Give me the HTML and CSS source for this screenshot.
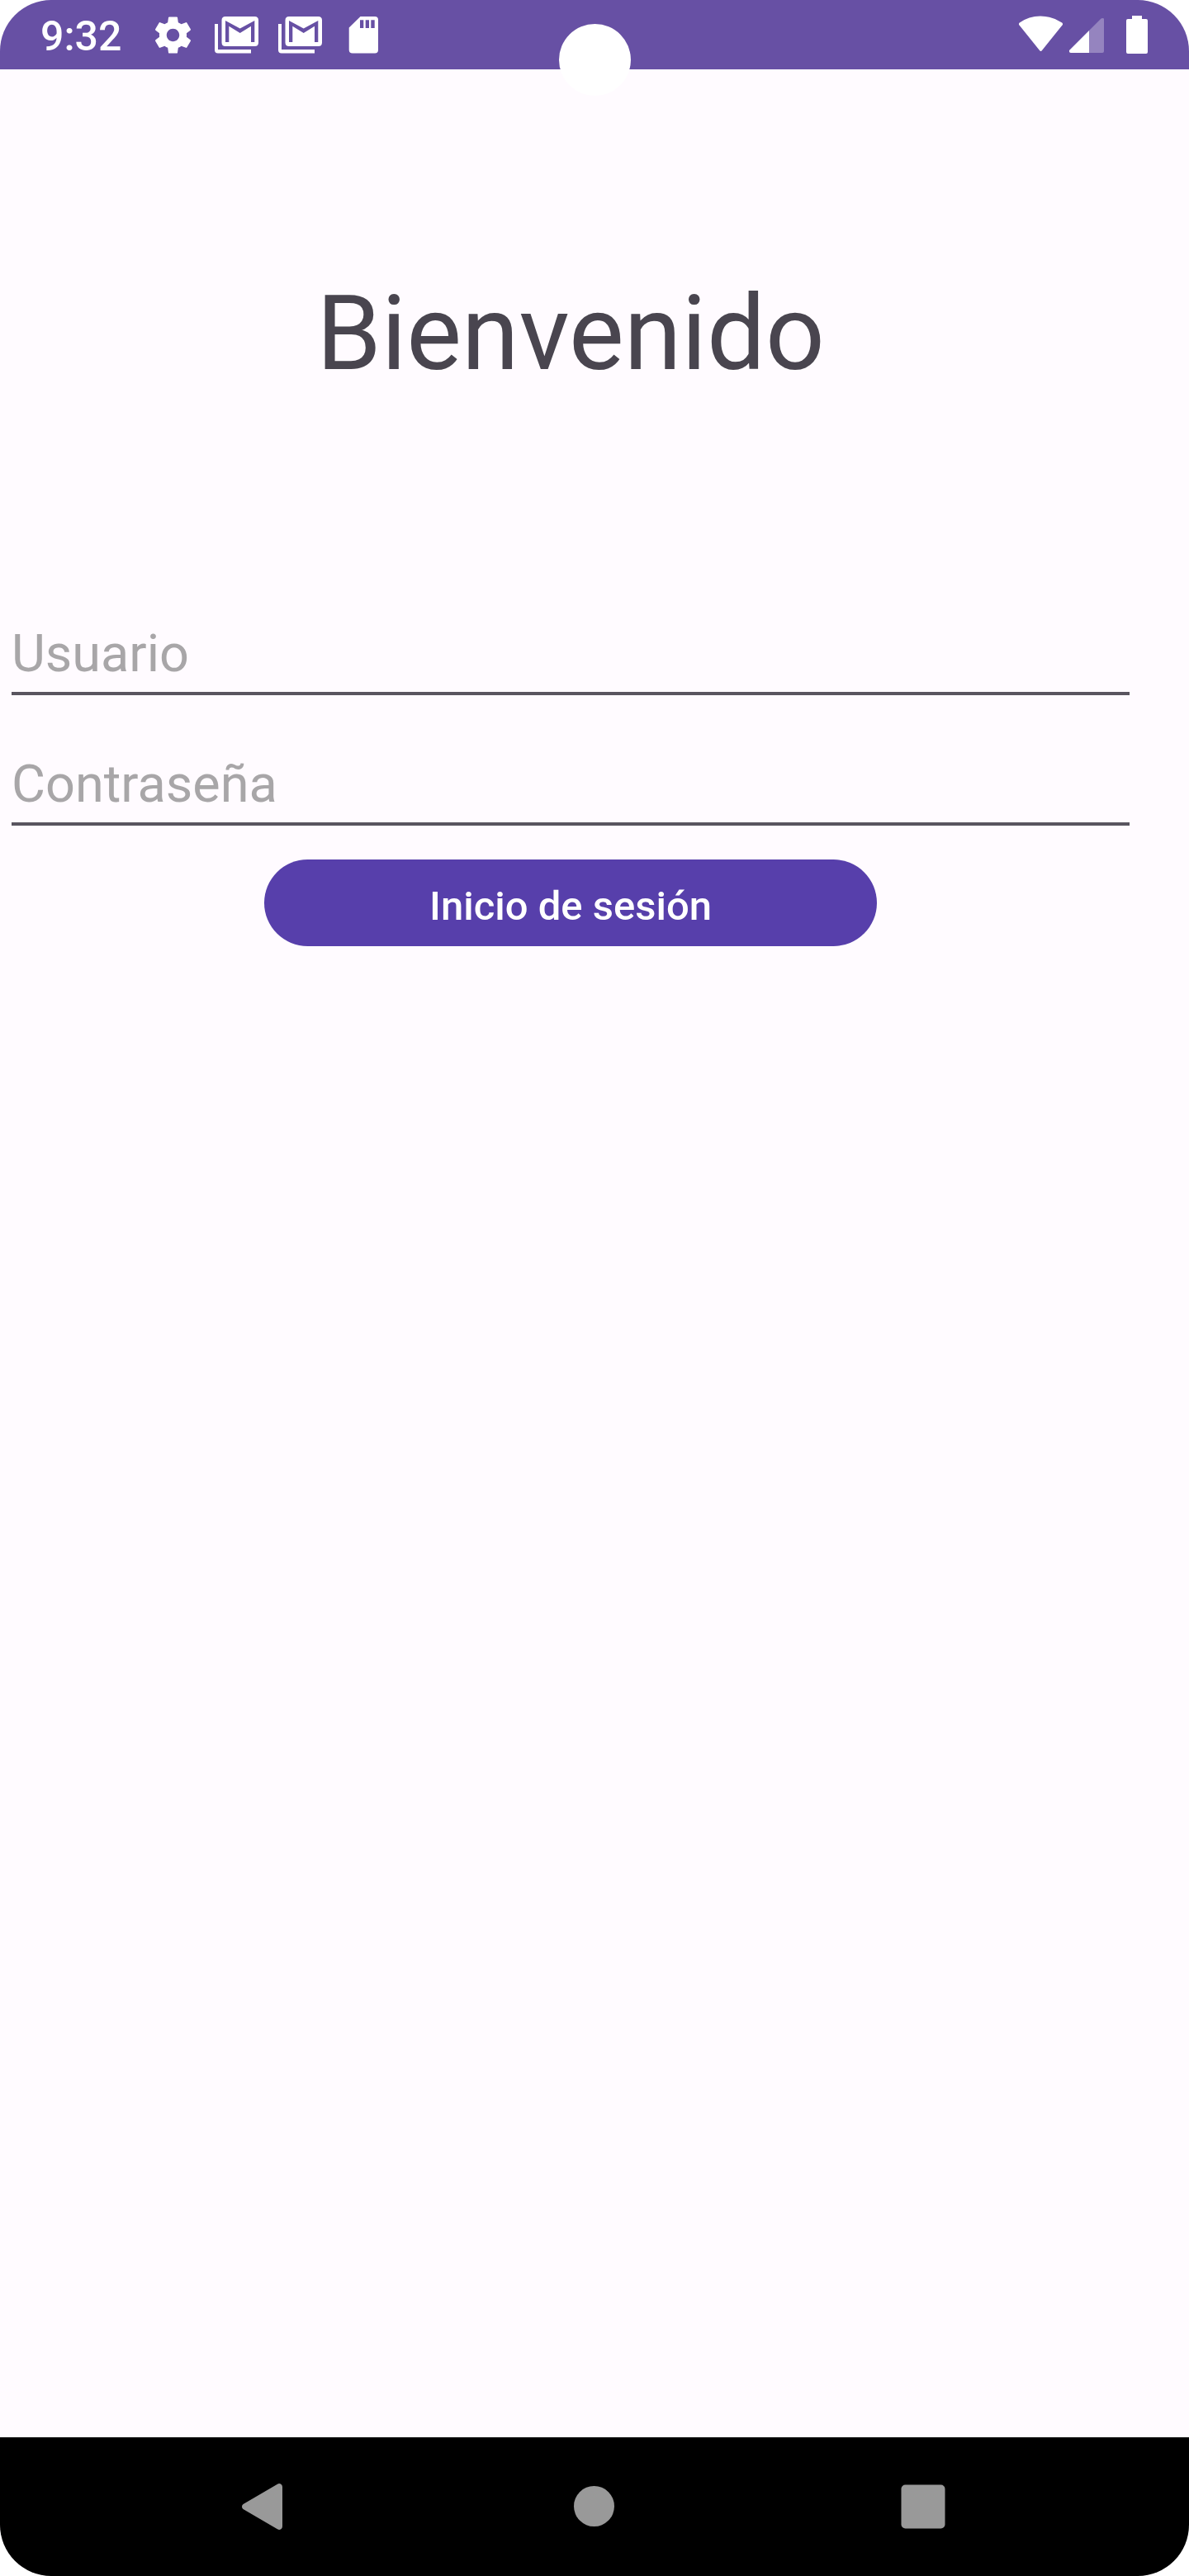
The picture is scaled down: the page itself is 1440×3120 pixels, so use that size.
FILE: index.html
```html
<!DOCTYPE html>
<html lang="es">
<head>
  <meta charset="utf-8">
  <meta name="viewport" content="width=device-width, initial-scale=1">
  <title>Bienvenido</title>
  <link rel="stylesheet" href="styles.css">
</head>
<body>
  <div class="device">
    <header class="status-bar">
      <span class="clock">9:32</span>
      <div class="notifications">
        <svg class="status-icon" viewBox="0 0 24 24"><path d="M19.43 12.98c.04-.32.07-.64.07-.98s-.03-.66-.07-.98l2.11-1.65c.19-.15.24-.42.12-.64l-2-3.46c-.12-.22-.39-.3-.61-.22l-2.49 1c-.52-.4-1.08-.73-1.69-.98l-.38-2.65C14.46 2.18 14.25 2 14 2h-4c-.25 0-.46.18-.49.42l-.38 2.65c-.61.25-1.17.59-1.69.98l-2.49-1c-.23-.09-.49 0-.61.22l-2 3.46c-.13.22-.07.49.12.64l2.11 1.65c-.04.32-.07.65-.07.98s.03.66.07.98l-2.11 1.65c-.19.15-.24.42-.12.64l2 3.46c.12.22.39.3.61.22l2.49-1c.52.4 1.08.73 1.69.98l.38 2.65c.03.24.24.42.49.42h4c.25 0 .46-.18.49-.42l.38-2.65c.61-.25 1.17-.59 1.69-.98l2.49 1c.23.09.49 0 .61-.22l2-3.46c.12-.22.07-.49-.12-.64l-2.11-1.65zM12 15.5c-1.93 0-3.5-1.57-3.5-3.5s1.57-3.5 3.5-3.5 3.5 1.57 3.5 3.5-1.57 3.5-3.5 3.5z"/></svg>
        <svg class="status-icon" viewBox="0 0 53 53"><path d="M0 13H4V44H44V48.500H4Q0 48.500 0 44.500Z"/><path fill-rule="evenodd" d="M13 4H48.500Q53 4 53 8.500V35.500Q53 40 48.500 40H13Q8.500 40 8.500 35.500V8.500Q8.500 4 13 4ZM13 9V35H17.300V15.700L30.700 24L44 15.700V35H48.300V9L30.700 18.500Z"/></svg>
        <svg class="status-icon" viewBox="0 0 53 53"><path d="M0 13H4V44H44V48.500H4Q0 48.500 0 44.500Z"/><path fill-rule="evenodd" d="M13 4H48.500Q53 4 53 8.500V35.500Q53 40 48.500 40H13Q8.500 40 8.500 35.500V8.500Q8.500 4 13 4ZM13 9V35H17.300V15.700L30.700 24L44 15.700V35H48.300V9L30.700 18.500Z"/></svg>
        <svg class="status-icon" viewBox="0 0 53 53"><path fill-rule="evenodd" d="M22.500 4H40Q44 4 44 8V44.500Q44 48.500 40 48.500H13Q8.700 48.500 8.700 44.500V17.500ZM22 8.300V18H26.300V8.300ZM28.700 8.300V18H33V8.300ZM35.300 8.300V18H39.700V8.300Z"/></svg>
      </div>
      <div class="system">
        <svg class="status-icon" viewBox="0 0 53 53"><path d="M.500 14.500Q-.800 13 .800 11.500Q12 3.500 26 3.500T52.200 11.500Q53.800 13 52.500 14.500L28 45Q26.500 46.800 25 45Z"/></svg>
        <svg class="status-icon" viewBox="0 0 53 53"><path opacity=".3" d="M27 21L41 7Q42.500 5.500 45 6.500V46Q45 48 43 48H27Z"/><path d="M27 21V48H5Q2.500 48 3 45Z"/></svg>
        <svg class="status-icon" viewBox="0 0 53 53"><path d="M21 3H33V7H38Q40 7 40 9V47Q40 49 38 49H16Q14 49 14 47V9Q14 7 16 7H21Z"/></svg>
      </div>
      <span class="camera"></span>
    </header>
    <main class="screen">
      <h1 class="title">Bienvenido</h1>
      <form class="login">
        <input class="field" type="text" placeholder="Usuario" aria-label="Usuario">
        <input class="field" type="password" placeholder="Contraseña" aria-label="Contraseña">
        <button class="submit" type="button">Inicio de sesión</button>
      </form>
    </main>
    <nav class="nav-bar">
      <button class="nav-button" type="button" aria-label="Atrás"><svg viewBox="0 0 100 100"><path d="M22.500 47L64 22.700Q66 21.500 68 22.500Q70 23.500 70 26V74Q70 76.500 68 77.500Q66 78.500 64 77.300L22.500 53Q21 52 21 50T22.500 47Z"/></svg></button>
      <button class="nav-button" type="button" aria-label="Inicio"><svg viewBox="0 0 100 100"><circle cx="49.500" cy="49.500" r="24.500"/></svg></button>
      <button class="nav-button" type="button" aria-label="Recientes"><svg viewBox="0 0 100 100"><rect x="23.500" y="23.500" width="53" height="53" rx="5"/></svg></button>
    </nav>
  </div>
</body>
</html>
```
FILE: styles.css
```css
* {
  box-sizing: border-box;
}

body {
  margin: 0;
  background: #fff;
  font-family: Roboto, "Noto Sans", sans-serif;
}

svg {
  display: block;
  fill: currentColor;
}

.device {
  display: flex;
  flex-direction: column;
  min-height: 100vh;
  border-radius: 62px;
  overflow: hidden;
  background: #fffbff;
}

.status-bar {
  position: relative;
  display: flex;
  align-items: center;
  height: 84px;
  padding: 0 37px 0 49px;
  background: #6750a4;
  color: #fff;
}

.clock {
  width: 134px;
  padding-top: 4px;
  font-size: 50px;
  font-weight: 500;
  line-height: 60px;
}

.notifications {
  display: flex;
  gap: 24px;
}

.system {
  display: flex;
  gap: 5px;
  margin-left: auto;
}

.status-icon {
  width: 53px;
  height: 53px;
}

/* Front camera cut-out, hanging over the edge of the status bar */
.camera {
  position: absolute;
  top: 29px;
  left: calc(50% - 43px);
  width: 87px;
  height: 87px;
  border-radius: 50%;
  background: #fff;
}

.screen {
  flex: 1;
  padding: 246px 72px 0 14px;
}

.title {
  margin: 0;
  color: #49454f;
  font-size: 126px;
  font-weight: 400;
  line-height: 148px;
  text-align: center;
}

.login {
  display: flex;
  flex-direction: column;
  padding-top: 276px;
}

.field {
  width: 100%;
  height: 88px;
  margin-bottom: 70px;
  padding: 0 0 10px;
  border: 0;
  border-bottom: 4px solid #59555f;
  border-radius: 0;
  background: transparent;
  color: #1c1b1f;
  font-family: inherit;
  font-size: 63px;
  line-height: 74px;
}

.field::placeholder {
  color: #a8a6a8;
  opacity: 1;
}

.field:last-of-type {
  margin-bottom: 41px;
}

.submit {
  align-self: center;
  width: 742px;
  max-width: 100%;
  height: 105px;
  padding: 8px 0 0;
  border: 0;
  border-radius: 53px;
  background: #573fab;
  color: #fff;
  font-family: inherit;
  font-size: 49px;
  font-weight: 500;
  line-height: 58px;
}

.nav-bar {
  display: flex;
  align-items: center;
  justify-content: center;
  gap: 298px;
  height: 168px;
  background: #000;
}

.nav-button {
  width: 100px;
  height: 100px;
  padding: 0;
  border: 0;
  background: transparent;
  color: #999;
}
```
